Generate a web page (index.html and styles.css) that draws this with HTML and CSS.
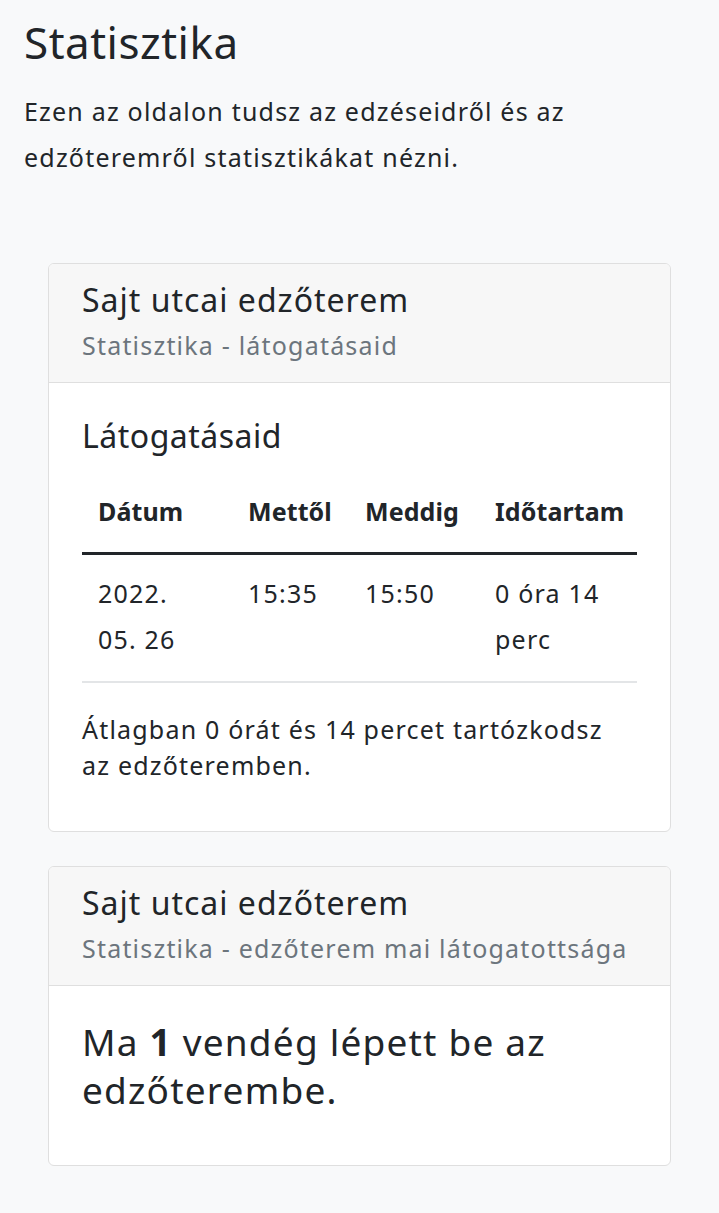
FILE: index.html
```html
<!DOCTYPE html>
<html lang="hu">
<head>
<meta charset="utf-8">
<title>Statisztika</title>
<link rel="stylesheet" href="styles.css">
</head>
<body>
<main class="page">
  <h1 class="title">Statisztika</h1>
  <p class="intro">Ezen az oldalon tudsz az edzéseidről és az edzőteremről statisztikákat nézni.</p>

  <section class="cards">
    <div class="card">
      <div class="card-header">
        <h5 class="card-title">Sajt utcai edzőterem</h5>
        <div class="card-subtitle">Statisztika - látogatásaid</div>
      </div>
      <div class="card-body">
        <h4 class="body-title">Látogatásaid</h4>
        <table class="visits">
          <colgroup>
            <col class="c1"><col class="c2"><col class="c3"><col class="c4">
          </colgroup>
          <thead>
            <tr><th>Dátum</th><th>Mettől</th><th>Meddig</th><th>Időtartam</th></tr>
          </thead>
          <tbody>
            <tr><td>2022. 05.&nbsp;26</td><td>15:35</td><td>15:50</td><td>0 óra 14 perc</td></tr>
          </tbody>
        </table>
        <p class="avg">Átlagban 0 órát és 14 percet tartózkodsz az edzőteremben.</p>
      </div>
    </div>

    <div class="card">
      <div class="card-header">
        <h5 class="card-title">Sajt utcai edzőterem</h5>
        <div class="card-subtitle">Statisztika - edzőterem mai látogatottsága</div>
      </div>
      <div class="card-body card-body-today">
        <p class="today">Ma <strong>1</strong> vendég lépett be az edzőterembe.</p>
      </div>
    </div>
  </section>
</main>
</body>
</html>
```

FILE: styles.css
```css
html, body {
  margin: 0;
  padding: 0;
}
body {
  background: #f8f9fa;
  color: #212529;
  font-family: "Noto Sans", "Open Sans", sans-serif;
  font-size: 25px;
  letter-spacing: 1.2px;
  line-height: 1.5;
}
.page {
  padding: 16px 24px 48px;
}
.title {
  margin: 0 0 19px;
  font-size: 44px;
  font-weight: 400;
  letter-spacing: 0.5px;
  line-height: 1.2;
}
.intro {
  margin: 0;
  line-height: 46px;
}
.cards {
  display: flex;
  flex-direction: column;
  gap: 34px;
  padding: 83px 24px 0;
}
.card {
  background: #fff;
  border: 1px solid #dfdfdf;
  border-radius: 6px;
  overflow: hidden;
}
.card-header {
  background: #f7f7f7;
  border-bottom: 1px solid #dfdfdf;
  padding: 17px 33px 17px;
}
.card-title {
  margin: 0 0 8px;
  font-size: 32px;
  font-weight: 400;
  letter-spacing: 1px;
  line-height: 1.2;
}
.card-subtitle {
  color: #6c757d;
  line-height: 1.5;
}
.card-body {
  padding: 34px 33px 48px;
}
.card-body-today {
  padding-top: 32px;
  padding-bottom: 51px;
}
.body-title {
  margin: 0 0 16px;
  font-size: 32px;
  font-weight: 400;
  letter-spacing: 0.5px;
  line-height: 1.2;
}
.visits {
  width: 100%;
  border-collapse: collapse;
  table-layout: fixed;
  margin-bottom: 28px;
}
.c1 { width: 150px; }
.c2 { width: 117px; }
.c3 { width: 130px; }
.c4 { width: auto; }
.visits th,
.visits td {
  text-align: left;
  vertical-align: top;
  line-height: 46px;
}
.visits th {
  padding: 17px 16px 18px;
  font-weight: 700;
  letter-spacing: 0.1px;
  white-space: nowrap;
  border-bottom: 3px solid #212529;
}
.visits td {
  padding: 15px 16px 19px;
  border-bottom: 2px solid #e3e5e7;
}
.avg {
  margin: 0;
  line-height: 36px;
}
.today {
  margin: 0;
  font-size: 37px;
  line-height: 48px;
}
.today strong {
  font-weight: 700;
}
```
